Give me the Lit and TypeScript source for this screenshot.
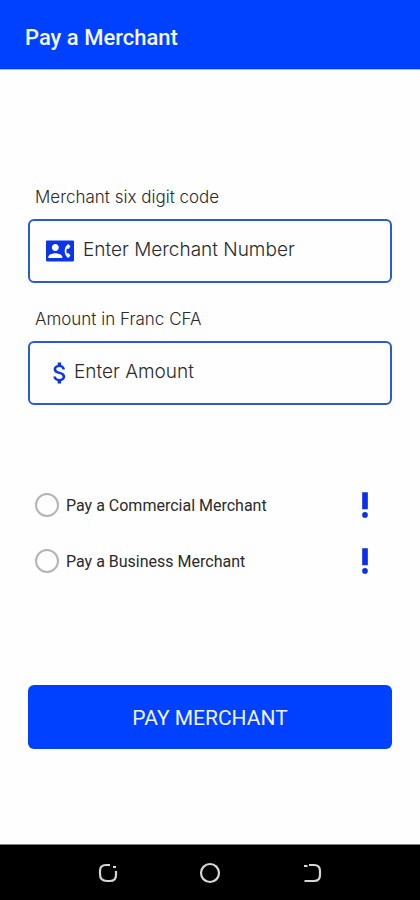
import { LitElement, html, css, svg } from "lit";
import { customElement, state } from "lit/decorators.js";

const contactIcon = svg`<path d="M23 3H1C.4 3 0 3.4 0 4v16c0 .6.4 1 1 1h22c.6 0 1-.4 1-1V4c0-.6-.4-1-1-1zM8 6c1.66 0 3 1.34 3 3s-1.34 3-3 3-3-1.34-3-3 1.34-3 3-3zm6 12H2v-1c0-2 4-3.1 6-3.1s6 1.1 6 3.1v1zm3.85-4h1.64L21 16l-1.99 1.99c-1.31-.98-2.28-2.38-2.73-3.99-.18-.64-.28-1.31-.28-2s.1-1.36.28-2c.45-1.62 1.42-3.01 2.73-3.99L21 8l-1.51 2h-1.64c-.22.63-.35 1.3-.35 2s.13 1.37.35 2z"/>`;

const dollarIcon = svg`<path d="M11.8 10.9c-2.27-.59-3-1.2-3-2.15 0-1.09 1.01-1.85 2.7-1.85 1.78 0 2.44.85 2.5 2.1h2.21c-.07-1.72-1.12-3.3-3.21-3.81V3h-3v2.16c-1.94.42-3.5 1.68-3.5 3.61 0 2.31 1.91 3.46 4.7 4.13 2.5.6 3 1.48 3 2.41 0 .69-.49 1.79-2.7 1.79-2.06 0-2.87-.92-2.98-2.1h-2.2c.12 2.19 1.76 3.42 3.68 3.83V21h3v-2.15c1.95-.37 3.5-1.5 3.5-3.55 0-2.84-2.43-3.81-4.7-4.4z"/>`;

const alertIcon = svg`<circle cx="12" cy="19" r="2"/><path d="M10 3h4v12h-4z"/>`;

@customElement("app-root")
export class AppRoot extends LitElement {
  @state() private kind = "";

  static styles = css`
    :host {
      display: flex;
      flex-direction: column;
      min-height: 100vh;
      background: #fefefe;
      color: #2a2a2a;
      font-family: Roboto, sans-serif;
    }
    * {
      box-sizing: border-box;
    }
    header {
      padding: 22px 25px 15px;
      background: #0040ff;
      border-bottom: 1px solid #a9bdfb;
    }
    h1 {
      margin: 0;
      font-size: 22px;
      line-height: 32px;
      font-weight: 500;
      color: #f2f6ff;
    }
    form {
      flex: 1;
      display: flex;
      flex-direction: column;
      padding: 115px 28px 32px;
    }
    .fields {
      display: flex;
      flex-direction: column;
      gap: 24px;
    }
    .field {
      display: flex;
      flex-direction: column;
      gap: 10px;
    }
    .label {
      padding-left: 7px;
      font-family: Inter, sans-serif;
      font-size: 17px;
      font-weight: 300;
      line-height: 24px;
    }
    .box {
      display: flex;
      align-items: center;
      height: 64px;
      padding: 0 16px;
      border: 2px solid #2a5ad6;
      border-radius: 6px;
    }
    .box.spaced {
      gap: 9px;
    }
    .icon {
      flex: none;
      width: 28px;
      height: 28px;
      fill: #0a35e8;
    }
    .input {
      flex: 1;
      min-width: 0;
      height: 60px;
      padding: 0 0 4px;
      border: 0;
      outline: 0;
      background: none;
      font-family: Inter, sans-serif;
      font-size: 19px;
      font-weight: 300;
      color: #2a2a2a;
    }
    .input::placeholder {
      color: #2a2a2a;
      opacity: 1;
    }
    .choices {
      margin: 72px 0 96px;
      padding: 0;
      border: 0;
    }
    .choice {
      display: flex;
      align-items: center;
      justify-content: space-between;
      height: 56px;
      padding: 0 10px 0 7px;
    }
    .option {
      display: flex;
      align-items: center;
      gap: 7px;
      font-size: 16px;
      line-height: 24px;
    }
    .caption {
      padding-top: 2px;
    }
    .radio {
      appearance: none;
      width: 24px;
      height: 24px;
      margin: 0;
      border: 2px solid #b4b4b4;
      border-radius: 50%;
    }
    .radio:checked {
      border-color: #0040ff;
      background: radial-gradient(#0040ff 50%, transparent 55%);
    }
    .plain {
      display: flex;
      padding: 0;
      border: 0;
      background: none;
    }
    .alert {
      width: 34px;
      height: 34px;
      fill: #0a2fe8;
    }
    .pay {
      height: 64px;
      padding: 2px 0 0;
      border: 0;
      border-radius: 6px;
      background: #0040ff;
      font-family: Roboto, sans-serif;
      font-size: 21px;
      color: #eef3ff;
    }
    nav {
      display: flex;
      justify-content: space-between;
      align-items: center;
      height: 56px;
      padding: 0 96px;
      border-top: 1px solid #808080;
      background: #000;
    }
    .glyph {
      width: 24px;
      height: 24px;
      fill: none;
      stroke: #d6d6d6;
      stroke-width: 2.2;
    }
  `;

  private choice(value: string, text: string) {
    return html`
      <div class="choice">
        <label class="option">
          <input class="radio" type="radio" name="kind" .checked=${this.kind === value}
            @change=${() => (this.kind = value)} />
          <span class="caption">${text}</span>
        </label>
        <button class="plain" type="button" aria-label="About this option">
          <svg class="alert" viewBox="0 0 24 24">${alertIcon}</svg>
        </button>
      </div>
    `;
  }

  render() {
    return html`
      <header><h1>Pay a Merchant</h1></header>
      <form @submit=${(e: Event) => e.preventDefault()}>
        <div class="fields">
          <div class="field">
            <label class="label" for="code">Merchant six digit code</label>
            <div class="box spaced">
              <svg class="icon" viewBox="0 0 24 24">${contactIcon}</svg>
              <input class="input" id="code" inputmode="numeric" placeholder="Enter Merchant Number" />
            </div>
          </div>
          <div class="field">
            <label class="label" for="amount">Amount in Franc CFA</label>
            <div class="box">
              <svg class="icon" viewBox="0 0 24 24">${dollarIcon}</svg>
              <input class="input" id="amount" inputmode="decimal" placeholder="Enter Amount" />
            </div>
          </div>
        </div>
        <fieldset class="choices" aria-label="Merchant type">
          ${this.choice("commercial", "Pay a Commercial Merchant")}
          ${this.choice("business", "Pay a Business Merchant")}
        </fieldset>
        <button class="pay" type="submit">PAY MERCHANT</button>
      </form>
      <nav>
        <button class="plain" aria-label="Recent apps">
          <svg class="glyph" viewBox="0 0 24 24">
            <path d="M14 4H10Q4 4 4 10v3q0 7 7 7h3q6 0 6-6V10M17 6h3" />
          </svg>
        </button>
        <button class="plain" aria-label="Home">
          <svg class="glyph" viewBox="0 0 24 24"><circle cx="12" cy="12" r="9" /></svg>
        </button>
        <button class="plain" aria-label="Back">
          <svg class="glyph" viewBox="0 0 24 24">
            <path d="M9 4h5q6 0 6 6v4q0 6-6 6H4.500M4 5h3.500" />
          </svg>
        </button>
      </nav>
    `;
  }
}
